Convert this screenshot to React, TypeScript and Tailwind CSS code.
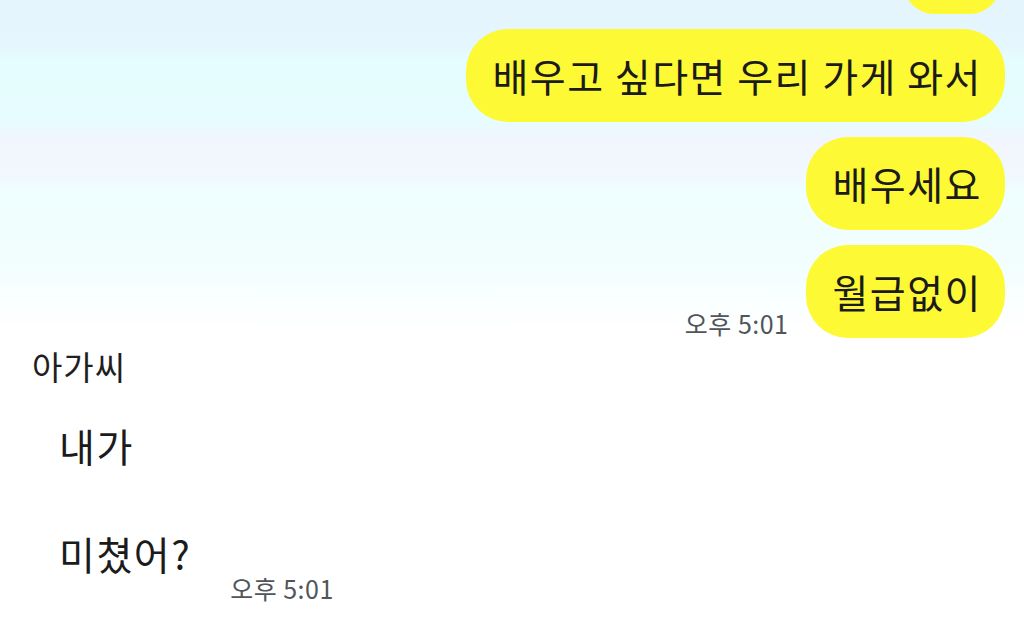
const font = { fontFamily: '"Noto Sans CJK KR", "Noto Sans", sans-serif' };

function MyBubble({ children }: { children: React.ReactNode }) {
  return (
    <div className="rounded-[42px] bg-[#fef935] py-[22px] pl-[26px] pr-[23px] text-[39px] leading-[49px] tracking-[1.5px] text-[#1b1b1b] whitespace-nowrap">
      {children}
    </div>
  );
}

function TimeStamp({ children }: { children: React.ReactNode }) {
  return <span className="text-[25px] leading-[30px] tracking-[0.5px] text-[#4f555a] whitespace-nowrap">{children}</span>;
}

export default function App() {
  return (
    <div
      style={font}
      className="h-[626px] w-[1024px] overflow-hidden bg-[linear-gradient(180deg,#e3f4fd_0px,#e5f6fe_45px,#e5fdfe_60px,#e6fcfe_120px,#f2f5fd_140px,#f1f8fe_175px,#effefe_190px,#f3fefe_270px,#ffffff_330px)]"
    >
      <div className="flex flex-col items-end gap-[15px] pr-[19px]">
        <div className="-mt-[46px] mr-[5px] h-[60px] w-[96px] rounded-[30px] bg-[#fef935]" />
        <MyBubble>배우고 싶다면 우리 가게 와서</MyBubble>
        <MyBubble>배우세요</MyBubble>
        <div className="flex items-end gap-[18px]">
          <TimeStamp>오후 5:01</TimeStamp>
          <MyBubble>월급없이</MyBubble>
        </div>
      </div>

      <div className="mt-[10px] flex flex-col">
        <span className="ml-[32px] text-[33px] leading-[36px] tracking-[1px] text-[#1f1f1f]">아가씨</span>
        <div className="mt-[12px] flex items-end">
          <div className="ml-[33px] rounded-[36px] bg-white py-[22px] pl-[26px] pr-[23px] text-[39px] leading-[54px] tracking-[1.5px] text-[#1b1b1b]">
            <div>내가</div>
            <div>&nbsp;</div>
            <div>미쳤어?</div>
          </div>
          <div className="mb-[-2px] ml-[16px]">
            <TimeStamp>오후 5:01</TimeStamp>
          </div>
        </div>
      </div>
    </div>
  );
}
